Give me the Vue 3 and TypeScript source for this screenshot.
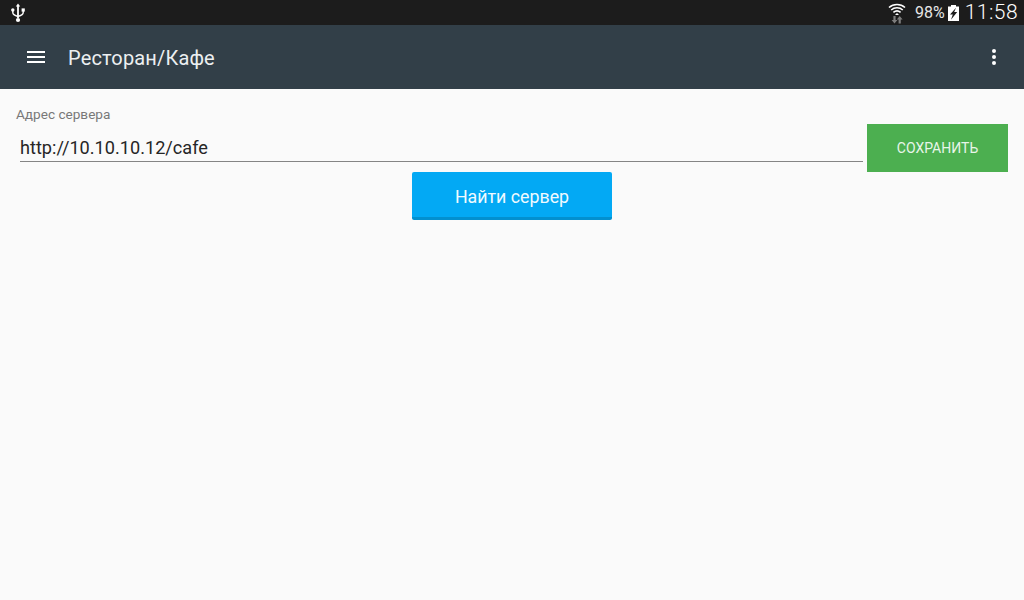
<script setup lang="ts">
const title: string = 'Ресторан/Кафе'
</script>

<template>
  <div class="screen">
    <header class="status">
      <svg class="usb" width="14" height="20" viewBox="0 0 14 20">
        <path d="M7 0.5 L9.2 3.6 H7.9 V15 H6.1 V3.6 H4.8 Z" fill="#fff" />
        <circle cx="7" cy="17" r="2.1" fill="#fff" />
        <path d="M1.8 7.5 V9.5 C1.8 11.5 3.5 12.5 7 13.5 C10.5 12.5 12.2 11.5 12.2 9.5 V7.5" stroke="#fff" stroke-width="1.4" fill="none" />
        <circle cx="1.8" cy="7" r="1.7" fill="#fff" />
        <rect x="10.6" y="5.4" width="3.2" height="3.2" fill="#fff" />
      </svg>
      <div class="status-right">
        <svg class="wifi" width="18" height="22" viewBox="0 0 18 22">
          <path d="M1 5.5 C5.5 1.5 12.5 1.5 17 5.5 M3.2 8 C6.5 5 11.5 5 14.8 8 M5.4 10.4 C7.5 8.6 10.5 8.6 12.6 10.4" stroke="#fff" stroke-width="1.6" fill="none" />
          <path d="M9 11 L11 13 H7 Z" fill="#fff" />
          <path d="M5.4 14 H7.6 V18 H9.4 L6.5 21.5 L3.6 18 H5.4 Z" fill="#7d7d7d" />
          <path d="M10.6 21.5 H12.8 V17.5 H14.6 L11.7 14 L8.8 17.5 H10.6 Z" fill="#7d7d7d" />
        </svg>
        <span class="pct">98%</span>
        <svg class="batt" width="11" height="16" viewBox="0 0 11 16">
          <path d="M3 0 H8 V1.5 H11 V16 H0 V1.5 H3 Z" fill="#fff" />
          <path d="M8 2.8 L2 9.4 H4.8 L3 14.8 L9.2 7 H6.2 Z" fill="#1c1c1c" />
        </svg>
        <span class="clock">11:58</span>
      </div>
    </header>

    <nav class="appbar">
      <div class="burger"><i></i><i></i><i></i></div>
      <h1 class="title">{{ title }}</h1>
      <div class="more"><i></i><i></i><i></i></div>
    </nav>

    <main class="content">
      <div class="field-row">
        <label class="field">
          <span class="label">Адрес сервера</span>
          <span class="value">http://10.10.10.12/cafe</span>
        </label>
        <button class="save">СОХРАНИТЬ</button>
      </div>
      <button class="find"><span class="find-text">Найти сервер</span></button>
    </main>
  </div>
</template>

<style>
html, body { margin: 0; padding: 0; }
</style>

<style scoped>
.screen {
  width: 1024px;
  height: 600px;
  display: flex;
  flex-direction: column;
  overflow: hidden;
  background: #fafafa;
  font-family: Roboto, "Liberation Sans", sans-serif;
}
.status {
  height: 25px;
  flex: none;
  box-sizing: border-box;
  padding: 0 6px 0 11px;
  background: #1c1c1c;
  display: flex;
  align-items: center;
  justify-content: space-between;
}
.usb { display: block; }
.status-right { display: flex; align-items: center; }
.wifi { display: block; margin-right: 9px; }
.pct { color: #e6e6e6; font-size: 16px; line-height: 25px; }
.batt { display: block; margin: 0 6px 0 3px; }
.clock { color: #fff; font-size: 21px; font-weight: 300; line-height: 25px; letter-spacing: 0.45px; }
.appbar {
  height: 64px;
  flex: none;
  box-sizing: border-box;
  background: #323f48;
  display: flex;
  align-items: center;
  padding: 0 28px 0 27px;
}
.burger { display: flex; flex-direction: column; gap: 3px; width: 18px; }
.burger i { display: block; height: 2px; background: #fff; }
.title {
  margin: 0 0 0 23px;
  flex: 1;
  color: #eceff1;
  font-size: 20px;
  font-weight: 400;
  letter-spacing: 0.15px;
  position: relative;
  top: 1px;
}
.more { display: flex; flex-direction: column; gap: 2px; align-items: center; width: 4px; }
.more i { display: block; width: 4px; height: 4px; border-radius: 50%; background: #fff; }
.content { flex: 1; display: flex; flex-direction: column; align-items: center; }
.field-row {
  align-self: stretch;
  box-sizing: border-box;
  padding: 0 16px;
  display: flex;
  align-items: flex-end;
  gap: 4px;
  height: 83px;
}
.field { flex: 1; display: flex; flex-direction: column; align-self: flex-start; margin-top: 18px; }
.label { color: #787878; font-size: 13.6px; line-height: 15px; }
.value {
  margin: 9px 0 0 4px;
  color: #262626;
  font-size: 18.15px;
  line-height: 34px;
  height: 30px;
  border-bottom: 1px solid #858585;
}
.save {
  width: 141px;
  height: 48px;
  border: 0;
  padding: 0;
  background: #4caf50;
  color: #e8f5e9;
  font: 400 14px Roboto, sans-serif;
}
.find {
  width: 200px;
  height: 48px;
  margin-top: 0;
  border: 0;
  border-bottom: 3px solid #0290cf;
  border-radius: 2px;
  padding: 0;
  background: #03a9f4;
  color: #f0faff;
  font: 400 17.8px Roboto, sans-serif;
}
.find-text { display: inline-block; padding-top: 4px; }
</style>
